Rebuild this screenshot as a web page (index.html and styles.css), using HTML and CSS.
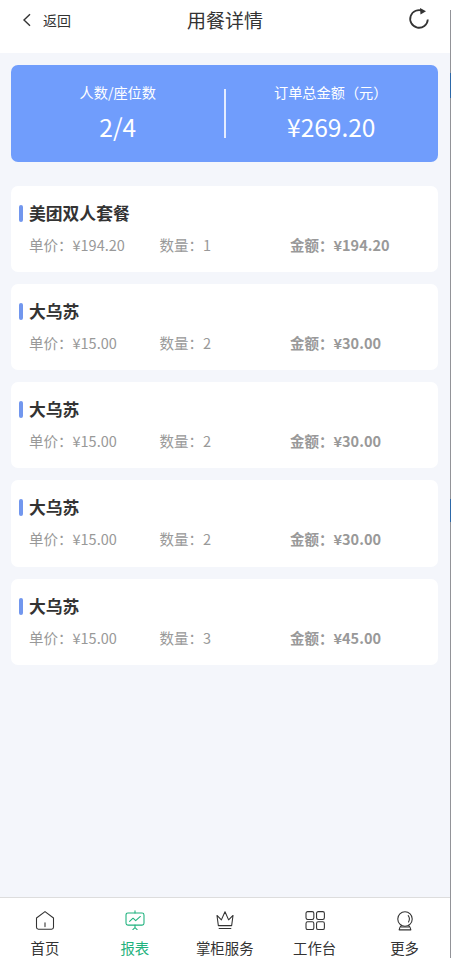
FILE: index.html
```html
<!DOCTYPE html>
<html lang="zh-CN">
<head>
<meta charset="utf-8">
<meta name="viewport" content="width=device-width, initial-scale=1">
<title>用餐详情</title>
<link rel="stylesheet" href="styles.css">
</head>
<body>
<div class="app">
  <header class="topbar">
    <a class="back"><svg width="10" height="14" viewBox="0 0 10 14"><path d="M8 1.2 2 7l6 5.8"/></svg><span>返回</span></a>
    <h1>用餐详情</h1>
    <svg class="refresh" width="22" height="22" viewBox="0 0 22 22"><path d="M15 3.1A8.8 8.8 0 1 0 19.8 11.5"/><path class="tip" d="M12 0 18 3.200 12.500 6.600Z"/></svg>
  </header>
  <main>
    <section class="summary">
      <div class="stat"><span class="label">人数/座位数</span><span class="value">2/4</span></div>
      <div class="stat"><span class="label">订单总金额（元）</span><span class="value">¥269.20</span></div>
    </section>
    <section class="dishes">
      <article class="dish"><h2>美团双人套餐</h2><div class="info"><span>单价：¥194.20</span><span>数量：1</span><b>金额：¥194.20</b></div></article>
      <article class="dish"><h2>大乌苏</h2><div class="info"><span>单价：¥15.00</span><span>数量：2</span><b>金额：¥30.00</b></div></article>
      <article class="dish"><h2>大乌苏</h2><div class="info"><span>单价：¥15.00</span><span>数量：2</span><b>金额：¥30.00</b></div></article>
      <article class="dish"><h2>大乌苏</h2><div class="info"><span>单价：¥15.00</span><span>数量：2</span><b>金额：¥30.00</b></div></article>
      <article class="dish"><h2>大乌苏</h2><div class="info"><span>单价：¥15.00</span><span>数量：3</span><b>金额：¥45.00</b></div></article>
    </section>
  </main>
  <nav class="tabs">
    <a class="tab"><svg viewBox="0 0 22 22"><path d="M2.3 8.2 11 1.7l8.7 6.500v9.500q0 2-2 2H4.300q-2 0-2-2ZM11 13v4"/></svg><span>首页</span></a>
    <a class="tab active"><svg viewBox="0 0 22 22"><rect x="1.800" y="3" width="18.400" height="12.500" rx="2"/><path d="M11 .7V3M11 15.500v2.500M8.800 20l2.200-2 2.200 2M5.500 11.600 9 8.400l2.700 2.500 4.800-4.300"/></svg><span>报表</span></a>
    <a class="tab"><svg viewBox="0 0 22 22"><path d="M4.200 16 2.800 5.600l4.500 4.500L11 1.800l3.700 8.300 4.500-4.500L17.800 16ZM5 18.900h12"/></svg><span>掌柜服务</span></a>
    <a class="tab"><svg viewBox="0 0 22 22"><rect x="1.800" y="1.700" width="8" height="8" rx="1.700"/><rect x="12.600" y="1.700" width="8" height="8" rx="1.700"/><rect x="1.800" y="12" width="8" height="8" rx="1.700"/><rect x="12.600" y="12" width="8" height="8" rx="1.700"/></svg><span>工作台</span></a>
    <a class="tab"><svg viewBox="0 0 22 22"><circle cx="11" cy="9.200" r="7.400"/><path d="M14.300 5.700q2.300 3 .3 6.500M7.300 15.700q-2 2-2.300 4.600h12q-.3-2.600-2.300-4.600M7.300 17.400h7.400"/></svg><span>更多</span></a>
  </nav>
  <div class="edge"><i></i><i></i></div>
</div>
</body>
</html>
```

FILE: styles.css
```css
* { box-sizing: border-box; margin: 0; padding: 0; }
body { background: #f4f6fb; font-family: "Noto Sans CJK SC", sans-serif; color: #333; }
svg { fill: none; stroke: #333; }
.app { position: relative; width: 451px; height: 958px; display: flex; flex-direction: column; overflow: hidden; }

.topbar { height: 53px; background: #fff; display: grid; grid-template-columns: 1fr auto 1fr; padding: 0 21px 14px 22px; align-items: center; }
.back { display: flex; align-items: center; gap: 11px; font-size: 14px; line-height: 20px; }
.back svg { stroke-width: 1.4; }
.topbar h1 { font-size: 19px; line-height: 28px; font-weight: 400; margin-left: -2px; }
.refresh { justify-self: end; stroke-width: 1.8; margin-bottom: 2px; }
.refresh .tip { fill: #333; stroke: none; }

main { flex: 1; padding: 12px 13px 0 11px; }
.summary { position: relative; height: 97px; border-radius: 7px; background: #709dfc; color: #fff; display: flex; }
.summary::after { content: ""; position: absolute; left: 213px; top: 24px; width: 1.500px; height: 49px; background: #e4ecff; }
.stat { flex: 1; display: flex; flex-direction: column; align-items: center; padding-top: 17px; }
.label { font-size: 14.200px; line-height: 21px; }
.value { font-size: 24.500px; line-height: 36px; margin-top: 6px; }
.stat + .stat .label { margin-left: -1px; }

.dishes { display: flex; flex-direction: column; gap: 12px; margin-top: 23.500px; }
.dish { height: 86.300px; background: #fff; border-radius: 7px; padding: 15px 0 0 8px; }
.dish h2 { display: flex; align-items: center; gap: 6px; font-size: 16.800px; line-height: 25px; font-weight: 700; }
.dish h2::before { content: ""; width: 4px; height: 17px; border-radius: 2px; background: #7297ee; }
.info { display: grid; grid-template-columns: 130.500px 130.500px 1fr; padding-left: 10px; margin-top: 8px; font-size: 14.500px; line-height: 21px; color: #999; }

.tabs { height: 61px; background: #fff; border-top: 1px solid #ddd; display: flex; padding-right: 1.500px; }
.tab { flex: 1; display: flex; flex-direction: column; align-items: center; padding-top: 11.500px; }
.tab svg { width: 22px; height: 22px; stroke-width: 1.100; stroke-linecap: round; stroke-linejoin: round; }
.tab span { font-size: 14.400px; line-height: 21px; margin-top: 6px; white-space: nowrap; }
.active { color: #1fb27e; }
.active svg { stroke: #1fb27e; }

.edge { position: absolute; right: 0; top: 10px; bottom: 0; width: 1.500px; background: #929398; }
.edge i { position: absolute; left: 0; width: 2px; height: 25px; top: 63px; background: #2d68a8; }
.edge i + i { top: 489px; height: 23px; }
```
